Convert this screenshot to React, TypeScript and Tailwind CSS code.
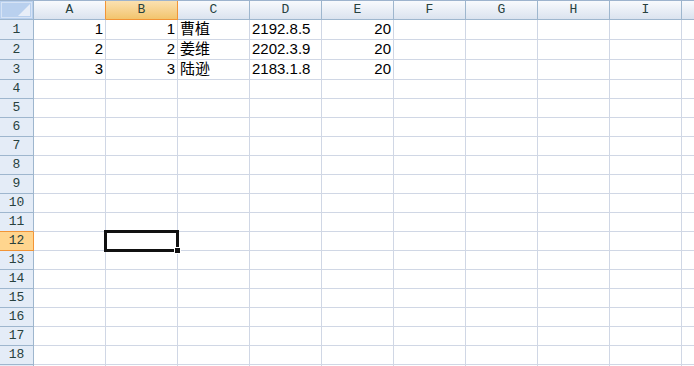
import React from "react";

const cols = ["A", "B", "C", "D", "E", "F", "G", "H", "I", "J"];

type Cell = { v: string; right?: boolean };

const data: Cell[][] = [
  [{ v: "1", right: true }, { v: "1", right: true }, { v: "曹植" }, { v: "2192.8.5" }, { v: "20", right: true }],
  [{ v: "2", right: true }, { v: "2", right: true }, { v: "姜维" }, { v: "2202.3.9" }, { v: "20", right: true }],
  [{ v: "3", right: true }, { v: "3", right: true }, { v: "陆逊" }, { v: "2183.1.8" }, { v: "20", right: true }],
];

const cellFont = { fontFamily: '"Liberation Sans", "Noto Sans CJK SC", sans-serif' };
const headFont = { fontFamily: '"Liberation Mono", "Noto Sans CJK SC", monospace' };

function HeaderRow() {
  return (
    <div className="flex h-[20px] border-t border-[#9db3cd]">
      <div className="w-[34px] shrink-0 border-r border-b border-[#9eb6ce] bg-[#b9d0ee] relative">
        <div className="absolute inset-[1px] border border-[#d6e3f5]" />
        <svg className="absolute right-[3px] bottom-[3px]" width="12" height="12" viewBox="0 0 12 12">
          <polygon points="12,0 12,12 0,12" fill="#e8eef8" />
        </svg>
      </div>
      {cols.map((c) => {
        const sel = c === "B";
        const orangeRight = c === "A" || c === "B";
        return (
          <div
            key={c}
            style={headFont}
            className={`w-[72px] shrink-0 flex items-center justify-center text-[13px] border-r border-b ${
              sel
                ? "bg-linear-to-b from-[#fbe1b0] to-[#f2c46c] border-b-[#f29436]"
                : "bg-linear-to-b from-[#f8fafd] to-[#dbe3ef] border-b-[#9eb6ce]"
            } ${orangeRight ? "border-r-[#f29436]" : "border-r-[#9eb6ce]"} text-[#27413e]`}
          >
            {c === "J" ? "" : c}
          </div>
        );
      })}
    </div>
  );
}

function Row({ n }: { n: number }) {
  const tall = n <= 3;
  const row = data[n - 1];
  const selRow = n === 12;
  const beforeSel = n === 11;
  return (
    <div className={`flex ${tall ? "h-[20px]" : "h-[19px]"}`}>
      <div
        style={headFont}
        className={`w-[34px] shrink-0 flex items-center justify-center text-[13px] text-[#27413e] border-r border-b ${
          selRow
            ? "bg-[#ffd58e] border-r-[#f29436] border-b-[#f29436]"
            : beforeSel
            ? "bg-[#e4ecf7] border-r-[#9eb6ce] border-b-[#f29436]"
            : "bg-[#e4ecf7] border-[#9eb6ce]"
        }`}
      >
        {n < 19 ? n : ""}
      </div>
      {cols.map((c, i) => {
        const cell = row ? row[i] : undefined;
        const selected = selRow && c === "B";
        return (
          <div
            key={c}
            style={cellFont}
            className={`relative w-[72px] shrink-0 border-r border-b border-[#d0d7e5] flex items-center text-[15px] text-black px-[2px] ${
              cell?.right ? "justify-end" : "justify-start"
            } ${selected ? "z-10" : ""}`}
          >
            {cell?.v}
            {selected && (
              <>
                <div className="absolute left-[-2px] top-[-2px] w-[75px] h-[22px] border-[3px] border-[#111]" />
                <div className="absolute right-[-4px] bottom-[-4px] w-[7px] h-[7px] bg-[#111] border border-white" />
              </>
            )}
          </div>
        );
      })}
    </div>
  );
}

export default function App() {
  const rows = Array.from({ length: 19 }, (_, i) => i + 1);
  return (
    <div className="w-[694px] h-[366px] overflow-hidden bg-white">
      <HeaderRow />
      {rows.map((n) => (
        <Row key={n} n={n} />
      ))}
    </div>
  );
}
